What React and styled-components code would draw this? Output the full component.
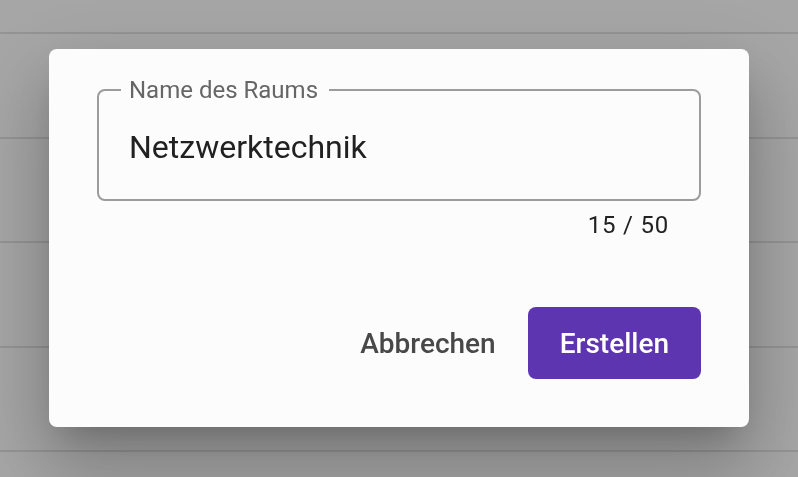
import styled, { createGlobalStyle } from "styled-components";

const Global = createGlobalStyle`
  html, body { margin: 0; padding: 0; }
  body { background: #a6a6a6; font-family: Roboto, "Liberation Sans", sans-serif; overflow: hidden; }
  * { box-sizing: border-box; }
`;

export default function App() {
  return (
    <>
      <Global />
      <Page>
        <Row first />
        <Row />
        <Row />
        <Row />
        <Row />
      </Page>
      <Backdrop>
        <Dialog>
          <Field>
            <Legend>Name des Raums</Legend>
            <Input defaultValue="Netzwerktechnik" maxLength={50} />
          </Field>
          <Counter>15 / 50</Counter>
          <Actions>
            <TextBtn>Abbrechen</TextBtn>
            <MainBtn>Erstellen</MainBtn>
          </Actions>
        </Dialog>
      </Backdrop>
    </>
  );
}

const Page = styled.div`width:100%;height:477px;background:#a6a6a6;`;
const Row = styled.div`height:${p => p.first ? "34px" : "104.5px"};border-bottom:2px solid #949494;`;
const Backdrop = styled.div`position:fixed;inset:0;display:flex;align-items:flex-start;justify-content:center;padding-top:49px;`;
const Dialog = styled.div`width:700px;height:378px;background:#fcfcfc;border-radius:8px;padding:29px 48px 48px;display:flex;flex-direction:column;box-shadow:0 22px 70px 8px rgba(0,0,0,0.12),0 48px 76px 6px rgba(0,0,0,0.14),0 18px 30px -14px rgba(0,0,0,0.2);`;
const Field = styled.fieldset`margin:0;min-width:0;border:2px solid #9c9c9c;border-radius:8px;padding:22px 30px 29px;`;
const Legend = styled.legend`margin-left:-8px;padding:0 11px 0 8px;font-size:24px;line-height:24px;color:#666;`;
const Input = styled.input`display:block;width:100%;height:46px;border:0;outline:none;padding:0;background:transparent;font-family:Roboto,"Liberation Sans",sans-serif;font-size:32px;color:#212121;`;
const Counter = styled.div`align-self:flex-end;margin-top:12px;padding-right:32px;font-size:24px;line-height:24px;letter-spacing:0.8px;color:#222;`;
const Actions = styled.div`margin-top:auto;display:flex;justify-content:flex-end;align-items:center;gap:16px;`;
const TextBtn = styled.button`height:72px;padding:0 16px;border:0;border-radius:8px;background:transparent;font-family:Roboto,"Liberation Sans",sans-serif;font-size:28px;font-weight:500;color:#484848;cursor:pointer;`;
const MainBtn = styled.button`height:72px;padding:0 32px;border:0;border-radius:8px;background:#5e35b1;font-family:Roboto,"Liberation Sans",sans-serif;font-size:28px;font-weight:500;color:#fff;cursor:pointer;`;
